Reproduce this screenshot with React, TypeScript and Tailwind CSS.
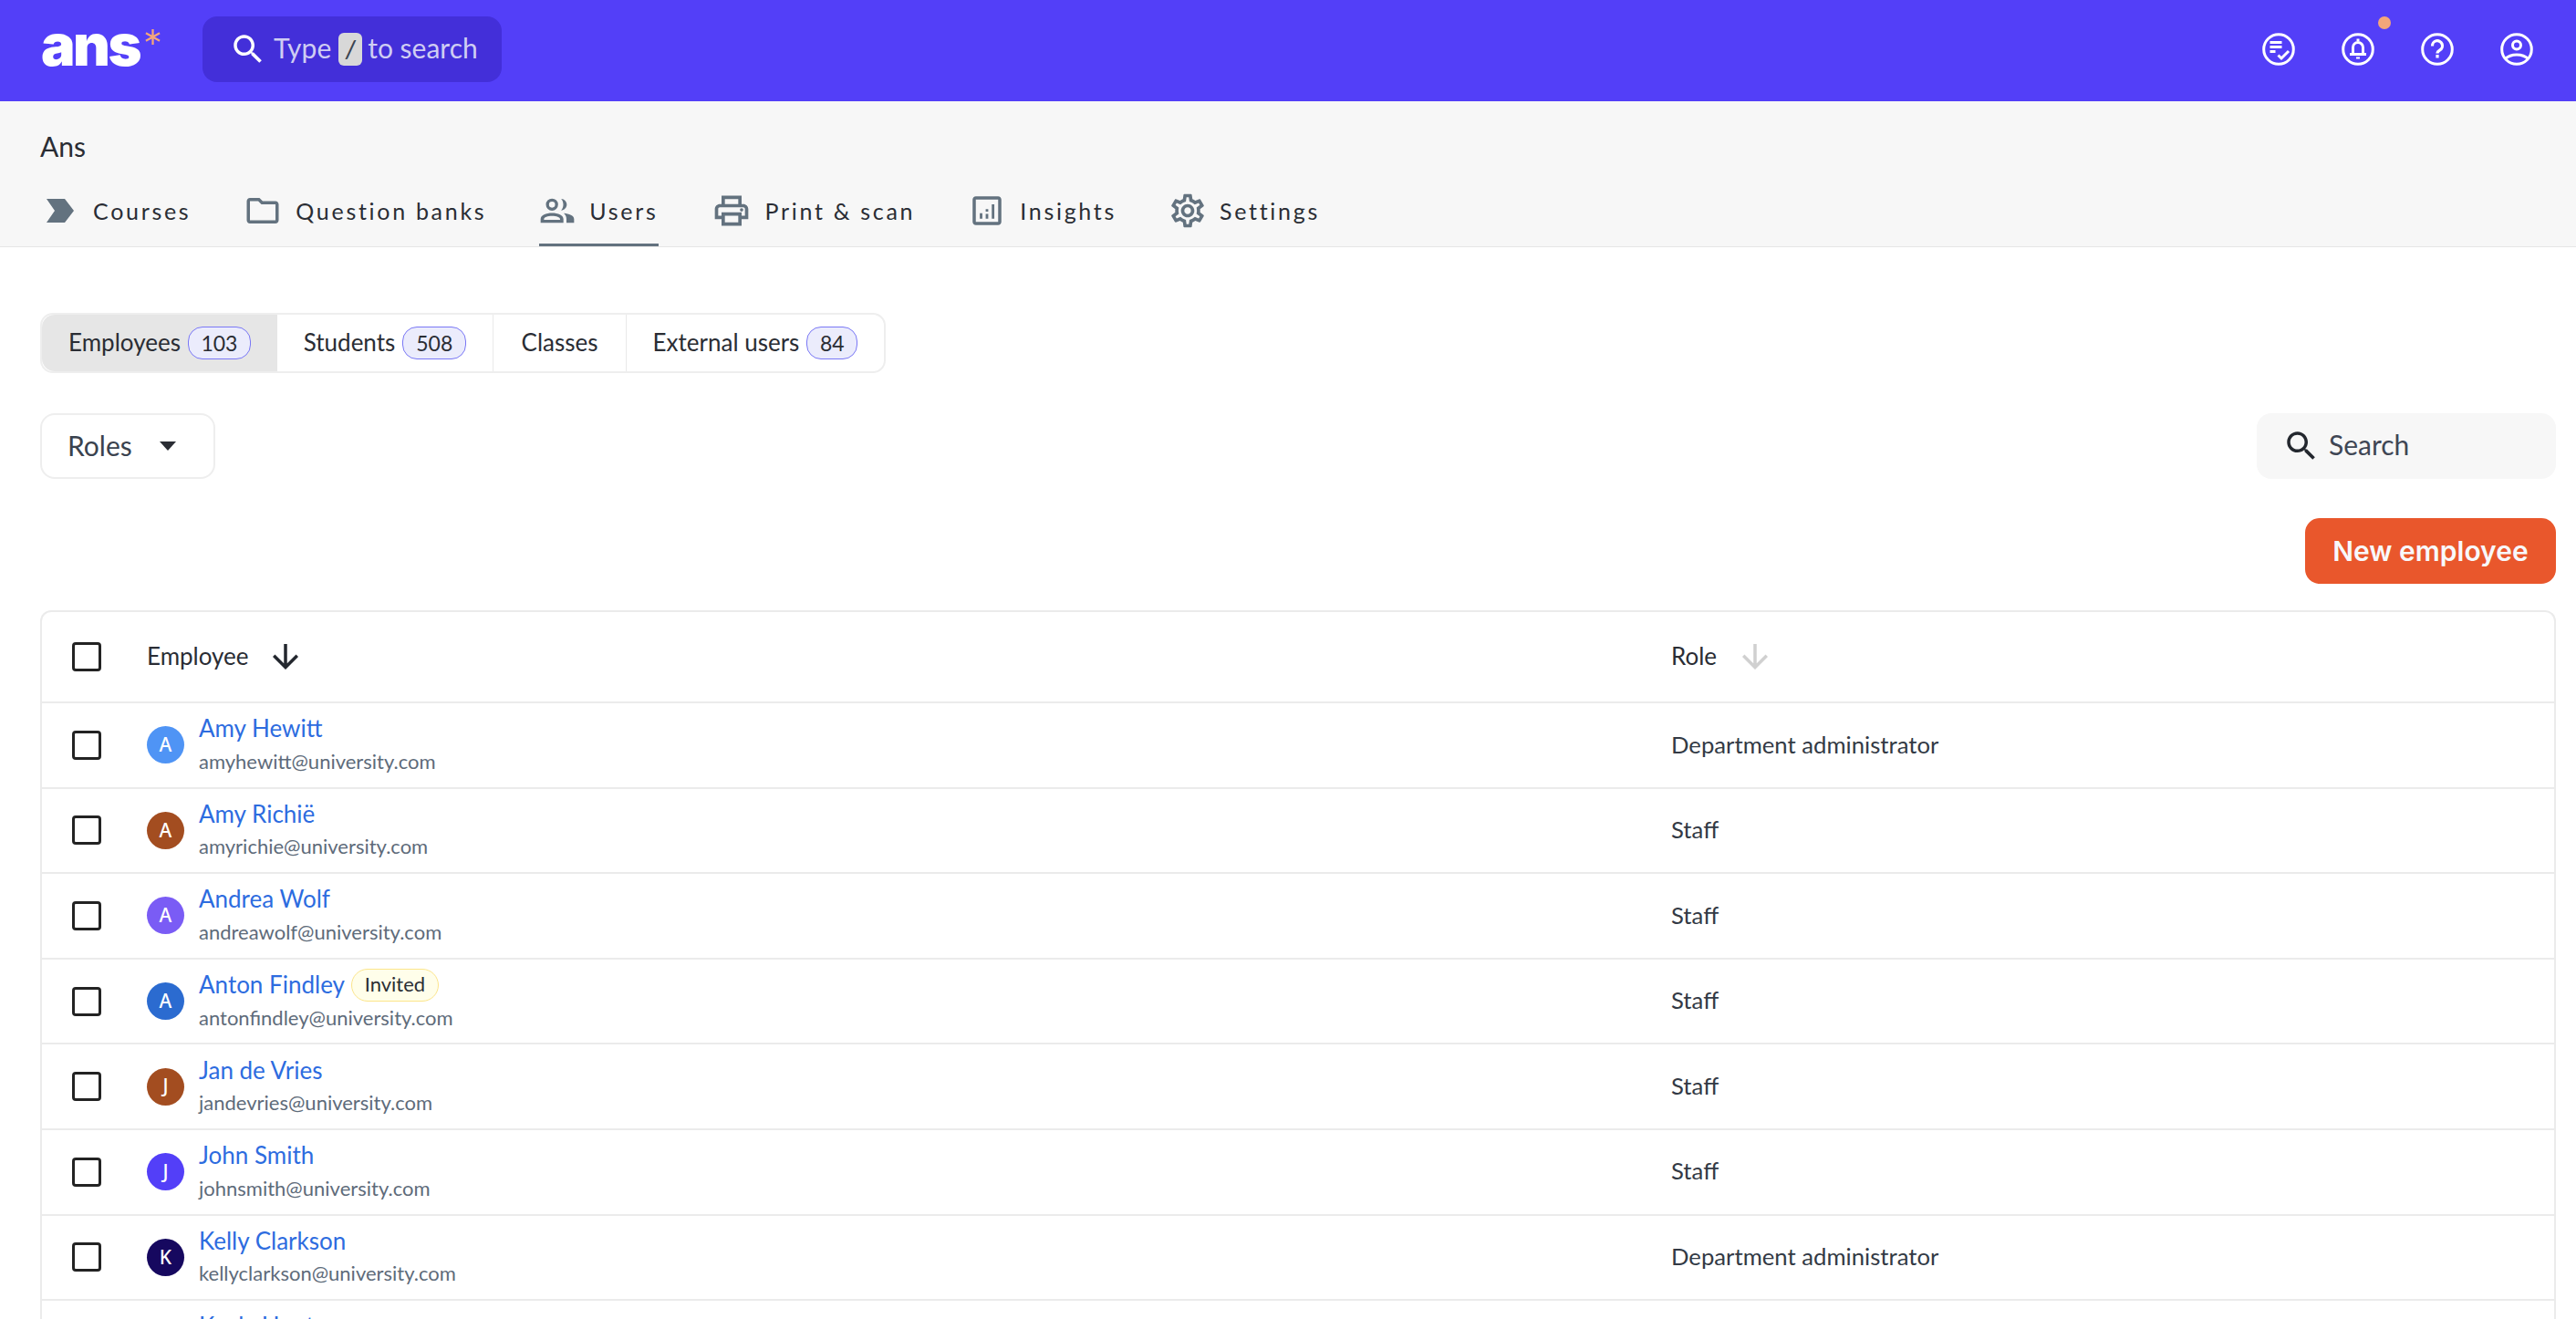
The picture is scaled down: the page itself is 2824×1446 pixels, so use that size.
import type { ReactNode } from 'react';

const employees = [
  { name: 'Amy Hewitt', email: 'amyhewitt@university.com', role: 'Department administrator', letter: 'A', color: 'bg-[#4f94f5]' },
  { name: 'Amy Richië', email: 'amyrichie@university.com', role: 'Staff', letter: 'A', color: 'bg-[#a34d20]' },
  { name: 'Andrea Wolf', email: 'andreawolf@university.com', role: 'Staff', letter: 'A', color: 'bg-[#7a5cf5]' },
  { name: 'Anton Findley', email: 'antonfindley@university.com', role: 'Staff', letter: 'A', color: 'bg-[#2b6bd0]', invited: true },
  { name: 'Jan de Vries', email: 'jandevries@university.com', role: 'Staff', letter: 'J', color: 'bg-[#a34d20]' },
  { name: 'John Smith', email: 'johnsmith@university.com', role: 'Staff', letter: 'J', color: 'bg-[#533ff8]' },
  { name: 'Kelly Clarkson', email: 'kellyclarkson@university.com', role: 'Department administrator', letter: 'K', color: 'bg-[#16085f]' },
  { name: 'Kayla Hunter', email: 'kaylahunter@university.com', role: 'Staff', letter: 'K', color: 'bg-[#4f94f5]' },
];

const SearchIcon = ({ className }: { className: string }) => (
  <svg viewBox="0 0 24 24" fill="currentColor" className={className}>
    <path d="M15.5 14h-.79l-.28-.27C15.41 12.59 16 11.11 16 9.5 16 5.91 13.09 3 9.5 3S3 5.91 3 9.5 5.91 16 9.5 16c1.61 0 3.09-.59 4.23-1.57l.27.28v.79l5 4.99L20.49 19l-4.99-5zm-6 0C7.01 14 5 11.99 5 9.5S7.01 5 9.5 5 14 7.01 14 9.5 11.99 14 9.5 14z" />
  </svg>
);

const ArrowDown = ({ className }: { className: string }) => (
  <svg viewBox="0 0 24 24" fill="currentColor" className={className}>
    <path d="M20 12l-1.41-1.41L13 16.17V4h-2v12.17l-5.58-5.59L4 12l8 8 8-8z" />
  </svg>
);

const RoundIcon = ({ children }: { children: ReactNode }) => (
  <svg viewBox="0 0 36 36" fill="none" stroke="white" strokeWidth="3" className="w-[36px] h-[36px]">
    <circle cx="18" cy="18" r="16.3" />
    {children}
  </svg>
);

const tabs: { label: string; width: string; active?: boolean; icon: ReactNode }[] = [
  {
    label: 'Courses',
    width: 'w-[42px]',
    icon: (
      <svg viewBox="0 0 30 26" fill="currentColor" className="w-[30px] h-[26px] shrink-0">
        <path d="M0 0h20l10 13-10 13H0l9-13z" />
      </svg>
    ),
  },
  {
    label: 'Question banks',
    width: 'w-[42px]',
    icon: (
      <svg viewBox="0 0 24 24" fill="currentColor" className="w-[42px] h-[42px] shrink-0">
        <path d="M9.17 6l2 2H20v10H4V6h5.17M10 4H4c-1.1 0-1.99.9-1.99 2L2 18c0 1.1.9 2 2 2h16c1.1 0 2-.9 2-2V8c0-1.1-.9-2-2-2h-8l-2-2z" />
      </svg>
    ),
  },
  {
    label: 'Users',
    width: 'w-[40px]',
    active: true,
    icon: (
      <svg viewBox="0 0 24 24" fill="currentColor" className="w-[40px] h-[40px] shrink-0">
        <path d="M8.5 4a4 4 0 1 1 0 8 4 4 0 0 1 0-8zm0 2a2 2 0 1 0 0 4 2 2 0 0 0 0-4z" />
        <path d="M14.5 4.2c2.1.1 3.7 1.8 3.7 3.8s-1.6 3.7-3.7 3.8c.9-1 1.4-2.3 1.4-3.8s-.5-2.8-1.4-3.8z" />
        <path d="M1 20v-2.5C1 15 4.5 13.5 8.5 13.5s7.5 1.5 7.5 4V20H1zm2.2-2h10.6v-.5c0-1-2.4-2-5.300-2s-5.300 1-5.300 2v.5z" />
        <path d="M16.2 13.7c3.5.3 6.8 1.5 6.8 3.8V20h-5v-2.5c0-1.5-.7-2.8-1.8-3.8z" />
      </svg>
    ),
  },
  {
    label: 'Print & scan',
    width: 'w-[44px]',
    icon: (
      <svg viewBox="0 0 24 24" fill="currentColor" className="w-[44px] h-[44px] shrink-0">
        <path d="M19 8h-1V3H6v5H5c-1.66 0-3 1.34-3 3v6h4v4h12v-4h4v-6c0-1.66-1.34-3-3-3zM8 5h8v3H8V5zm8 12v2H8v-4h8v2zm2-2v-2H6v2H4v-4c0-.55.45-1 1-1h14c.55 0 1 .45 1 1v4h-2z" />
        <circle cx="18" cy="11.5" r="1" />
      </svg>
    ),
  },
  {
    label: 'Insights',
    width: 'w-[42px]',
    icon: (
      <svg viewBox="0 0 24 24" fill="currentColor" className="w-[42px] h-[42px] shrink-0">
        <path d="M19 3H5c-1.1 0-2 .9-2 2v14c0 1.1.9 2 2 2h14c1.1 0 2-.9 2-2V5c0-1.1-.9-2-2-2zm0 16H5V5h14v14z" />
        <path d="M7.5 13.5h1.6V17H7.5zM11.2 11h1.6v1.6h-1.6zM11.2 14h1.6v3h-1.6zM15 8h1.6v9H15z" />
      </svg>
    ),
  },
  {
    label: 'Settings',
    width: 'w-[40px]',
    icon: (
      <svg viewBox="0 0 24 24" fill="currentColor" className="w-[44px] h-[44px] shrink-0">
        <path d="M19.43 12.98c.04-.32.07-.64.07-.98 0-.34-.03-.66-.07-.98l2.11-1.65c.19-.15.24-.42.12-.64l-2-3.46c-.09-.16-.26-.25-.44-.25-.06 0-.12.01-.17.03l-2.49 1c-.52-.4-1.08-.73-1.69-.98l-.38-2.65C14.46 2.18 14.25 2 14 2h-4c-.25 0-.46.18-.49.42l-.38 2.65c-.61.25-1.17.59-1.69.98l-2.49-1c-.06-.02-.12-.03-.18-.03-.17 0-.34.09-.43.25l-2 3.46c-.13.22-.07.49.12.64l2.11 1.65c-.04.32-.07.65-.07.98 0 .33.03.66.07.98l-2.11 1.65c-.19.15-.24.42-.12.64l2 3.46c.09.16.26.25.44.25.06 0 .12-.01.17-.03l2.49-1c.52.4 1.08.73 1.69.98l.38 2.65c.03.24.24.42.49.42h4c.25 0 .46-.18.49-.42l.38-2.65c.61-.25 1.17-.59 1.69-.98l2.49 1c.06.02.12.03.18.03.17 0 .34-.09.43-.25l2-3.46c.12-.22.07-.49-.12-.64l-2.11-1.65zm-1.98-1.71c.04.31.05.52.05.73 0 .21-.02.43-.05.73l-.14 1.13.89.7 1.08.84-.7 1.21-1.27-.51-1.04-.42-.9.68c-.43.32-.84.56-1.25.73l-1.06.43-.16 1.13-.2 1.35h-1.4l-.19-1.35-.16-1.13-1.06-.43c-.43-.18-.83-.41-1.23-.71l-.91-.7-1.06.43-1.27.51-.7-1.21 1.08-.84.89-.7-.14-1.13c-.03-.31-.05-.54-.05-.74s.02-.43.05-.73l.14-1.13-.89-.7-1.08-.84.7-1.21 1.27.51 1.04.42.9-.68c.43-.32.84-.56 1.25-.73l1.06-.43.16-1.13.2-1.35h1.39l.19 1.35.16 1.13 1.06.43c.43.18.83.41 1.23.71l.91.7 1.06-.43 1.27-.51.7 1.21-1.07.85-.89.7.14 1.13zM12 8c-2.21 0-4 1.79-4 4s1.79 4 4 4 4-1.79 4-4-1.79-4-4-4zm0 6c-1.1 0-2-.9-2-2s.9-2 2-2 2 .9 2 2-.9 2-2 2z" />
      </svg>
    ),
  },
];

const segments = [
  { label: 'Employees', count: '103', box: 'w-[258px] bg-[#e6e6e6] rounded-l-[14px]', badge: 'w-[69px]' },
  { label: 'Students', count: '508', box: 'w-[237px] border-r border-[#e9e9e9]', badge: 'w-[70px]' },
  { label: 'Classes', box: 'w-[146px] border-r border-[#e9e9e9]' },
  { label: 'External users', count: '84', box: 'flex-1', badge: 'w-[56px]' },
];

const Checkbox = () => <span className="block w-[32px] h-[32px] shrink-0 border-[3.5px] border-[#232323] rounded-[4px]" />;

export default function App() {
  return (
    <div className="h-[1446px] overflow-hidden bg-white font-['Lato',sans-serif] text-[#2a2d34]">
      <header className="relative flex items-center h-[111px] bg-[#533ff8] pl-[47px] pr-[47px] pb-[4px]">
        <div className="relative self-start w-[175px] h-[107px]">
          <span className="absolute left-[-2px] top-[19px] text-[63px] leading-[60px] font-black tracking-[-2.5px] text-white font-['Inter',sans-serif]">ans</span>
          <svg viewBox="0 0 18 18" className="absolute left-[112px] top-[32px] w-[17px] h-[17px]" stroke="#f4a67a" strokeWidth="2.4">
            <path d="M9 0v18M1 4.5l16 9M17 4.5l-16 9" />
          </svg>
        </div>
        <div className="flex items-center w-[328px] h-[72px] rounded-[16px] bg-[#432fd9] pl-[30px]">
          <SearchIcon className="w-[42px] h-[42px] text-white -ml-[1px] shrink-0" />
          <span className="ml-[7px] pb-[2px] text-[30px] text-[#cfcdf3]">Type</span>
          <span className="flex items-center justify-center ml-[8px] w-[26px] h-[36px] rounded-[6px] bg-[#d8d8d8] text-[#3b4450] text-[26px] font-semibold italic">/</span>
          <span className="ml-[6px] pb-[2px] text-[30px] text-[#cfcdf3]">to search</span>
        </div>
        <div className="ml-auto flex items-center gap-[51px]">
          <RoundIcon>
            <path d="M8.5 10.5h13M8.5 15.5h13M8.5 20.5h6" strokeWidth="3" />
            <path d="M17.5 24.5l3.5 3.5 8-8" strokeWidth="3" />
          </RoundIcon>
          <div className="relative">
            <RoundIcon>
              <path d="M18 6.5v2.5M12.5 24v-8a5.5 5.5 0 0 1 11 0v8" strokeWidth="3" />
              <path d="M9 23.5h18" strokeWidth="3" />
              <path d="M16 27.5h4" strokeWidth="2" />
            </RoundIcon>
            <span className="absolute left-[40px] top-[-18px] w-[14px] h-[14px] rounded-full bg-[#f4a67a]" />
          </div>
          <RoundIcon>
            <path d="M12.5 14.5a5.5 5.5 0 1 1 8.3 4.4c-1.9 1.2-2.8 2-2.8 3.6" strokeWidth="3.2" />
            <path d="M18 24v3.5" strokeWidth="3.2" />
          </RoundIcon>
          <RoundIcon>
            <circle cx="18" cy="13.5" r="4.5" />
            <path d="M5 29c3.5-3.5 8-5 13-5s9.5 1.5 13 5" />
          </RoundIcon>
        </div>
      </header>

      <div className="h-[160px] bg-[#f7f7f7] border-b border-[#e6e6e6]">
        <div className="pl-[44px] pt-[31px] text-[30px] leading-[36px]">Ans</div>
        <nav className="flex items-end h-[92px] pl-[45px] gap-[58px]">
          {tabs.map((tab) => (
            <div
              key={tab.label}
              className={`flex items-center h-[76px] gap-[15px] border-b-[3px] text-[25px] tracking-[2.7px] ${tab.active ? 'border-[#63727f]' : 'border-transparent'}`}
            >
              <span className={`flex justify-center text-[#63727f] ${tab.width}`}>{tab.icon}</span>
              <span className="pt-[2px]">{tab.label}</span>
            </div>
          ))}
        </nav>
      </div>

      <div className="pl-[44px] pr-[22px] pt-[72px]">
        <div className="flex w-[927px] h-[66px] rounded-[14px] border-2 border-[#eeeeee] text-[26px]">
          {segments.map((seg) => (
            <div key={seg.label} className={`flex items-center justify-center gap-[8px] h-full ${seg.box}`}>
              <span className="pb-[2px]">{seg.label}</span>
              {seg.count && (
                <span className={`flex items-center justify-center h-[36px] rounded-[16px] border border-[#7a78f5] bg-[#ebecfc] text-[23px] ${seg.badge}`}>
                  {seg.count}
                </span>
              )}
            </div>
          ))}
        </div>

        <div className="flex justify-between mt-[44px]">
          <div className="flex items-center w-[192px] h-[72px] rounded-[16px] border-2 border-[#eeeeee] pl-[28px] pb-[2px] text-[30px] text-[#3a424e]">
            Roles
            <svg viewBox="0 0 18 10" fill="currentColor" className="ml-[30px] mt-[2px] w-[18px] h-[10px] text-[#2a2d34]">
              <path d="M0 0h18L9 10z" />
            </svg>
          </div>
          <div className="flex items-center w-[328px] h-[72px] rounded-[16px] bg-[#f7f7f7] pl-[30px] text-[30px] text-[#3f4654]">
            <SearchIcon className="w-[42px] h-[42px] text-[#23272e] -ml-[2px]" />
            <span className="ml-[9px] pb-[3px]">Search</span>
          </div>
        </div>

        <div className="flex justify-end mt-[43px]">
          <button className="w-[275px] h-[72px] rounded-[16px] bg-[#e9572c] text-[#f8f8fb] text-[30px] font-semibold font-['Inter',sans-serif]">
            New employee
          </button>
        </div>

        <div className="mt-[29px] w-[2758px] rounded-t-[12px] border-2 border-b-0 border-[#ebebeb]">
          <div className="flex items-center h-[98px] pl-[33px] text-[26px]">
            <Checkbox />
            <div className="flex items-center w-[1671px] ml-[50px]">
              <span className="pb-[2px]">Employee</span>
              <ArrowDown className="ml-[19px] w-[42px] h-[42px] text-[#23272e]" />
            </div>
            <div className="flex items-center">
              <span className="pb-[2px]">Role</span>
              <ArrowDown className="ml-[21px] w-[42px] h-[42px] text-[#d0d0d0]" />
            </div>
          </div>
          {employees.map((emp) => (
            <div key={emp.email} className="flex items-center h-[93.6px] pl-[33px] border-t-2 border-[#ebebeb]">
              <Checkbox />
              <div className="flex items-center w-[1671px] ml-[50px]">
                <span className={`flex items-center justify-center w-[41px] h-[41px] rounded-full text-white text-[21px] font-medium font-['Noto_Sans',sans-serif] shrink-0 ${emp.color}`}>
                  {emp.letter}
                </span>
                <div className="ml-[16px]">
                  <div className="flex items-center h-[36px]">
                    <span className="text-[26px] text-[#2d6cdf]">{emp.name}</span>
                    {emp.invited && (
                      <span className="flex items-center justify-center ml-[7px] w-[96px] h-[36px] rounded-[18px] border border-[#fce58a] bg-[#fffeea] pb-[2px] text-[22px] text-[#2a2d34]">
                        Invited
                      </span>
                    )}
                  </div>
                  <div className="text-[22px] leading-[36px] text-[#5e6b7a]">{emp.email}</div>
                </div>
              </div>
              <span className="pb-[2px] text-[25.7px] text-[#333a45]">{emp.role}</span>
            </div>
          ))}
        </div>
      </div>
    </div>
  );
}
